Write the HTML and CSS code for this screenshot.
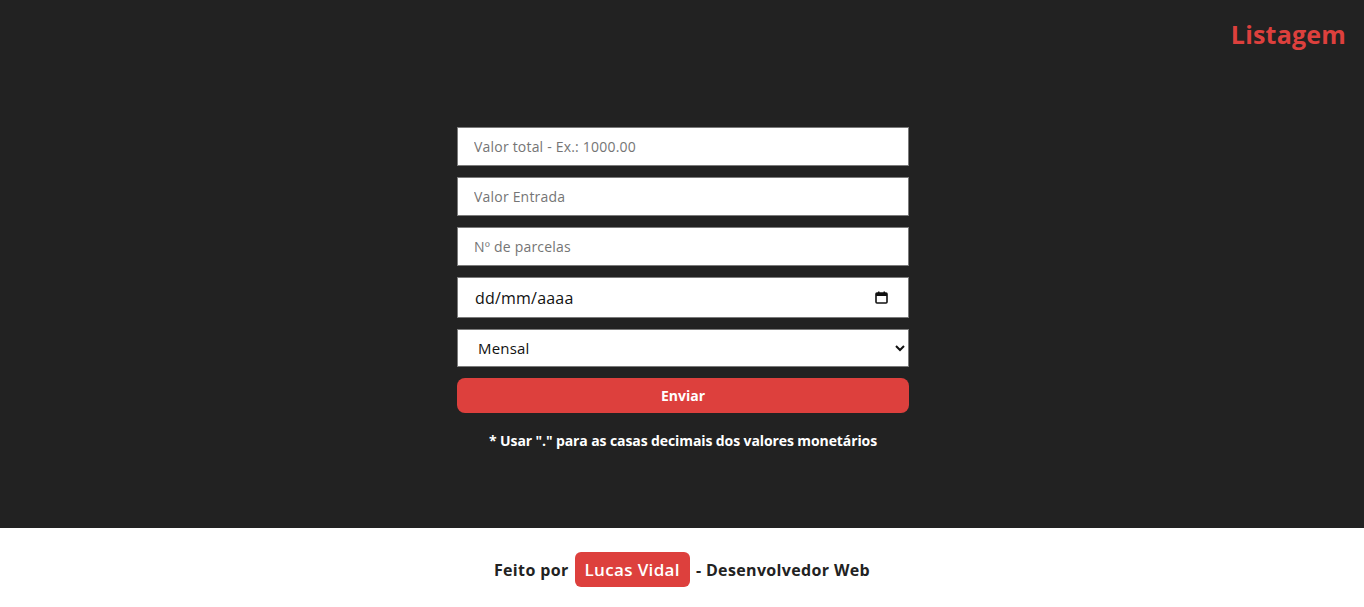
FILE: index.html
```html
<!DOCTYPE html>
<html lang="pt-BR">
<head>
<meta charset="utf-8">
<title>Simulador</title>
<link rel="stylesheet" href="styles.css">
</head>
<body>
<main class="main">
  <header class="topbar">
    <a class="nav-link" href="#">Listagem</a>
  </header>
  <form class="form">
    <input class="field" type="text" placeholder="Valor total - Ex.: 1000.00">
    <input class="field" type="text" placeholder="Valor Entrada">
    <input class="field" type="text" placeholder="Nº de parcelas">
    <div class="field date-field">
      <span class="date-text">dd/mm/aaaa</span>
      <svg class="cal-icon" width="13" height="13" viewBox="0 0 13 13" aria-hidden="true">
        <rect x="1" y="2" width="11" height="10" rx="1" fill="none" stroke="#111" stroke-width="1.6"/>
        <rect x="1" y="2" width="11" height="3" fill="#111"/>
        <rect x="3" y="0.5" width="1.5" height="2" fill="#111"/>
        <rect x="8.5" y="0.5" width="1.5" height="2" fill="#111"/>
      </svg>
    </div>
    <select class="field select-field">
      <option>Mensal</option>
      <option>Quinzenal</option>
      <option>Semanal</option>
    </select>
    <button class="submit" type="button">Enviar</button>
    <p class="note">* Usar "." para as casas decimais dos valores monetários</p>
  </form>
</main>
<footer class="footer">
  <span>Feito por</span>
  <span class="badge">Lucas Vidal</span>
  <span>- Desenvolvedor Web</span>
</footer>
</body>
</html>
```
FILE: styles.css
```css
* { box-sizing: border-box; }
html, body { margin: 0; padding: 0; }
body {
  font-family: "Open Sans", "Noto Sans", sans-serif;
  background: #ffffff;
}
.main {
  background: #222222;
  height: 528px;
  display: flex;
  flex-direction: column;
  align-items: center;
}
.topbar {
  align-self: stretch;
  display: flex;
  justify-content: flex-end;
  padding: 17px 18px 0 0;
  height: 127px;
}
.nav-link {
  color: #dd403d;
  font-weight: 700;
  font-size: 25px;
  text-decoration: none;
  line-height: 34px;
  letter-spacing: 0.2px;
}
.form {
  width: 452px;
  margin-left: 2px;
  display: flex;
  flex-direction: column;
}
.field {
  height: 39px;
  margin: 0 0 11px 0;
  border: 1px solid #7a7a7a;
  background: #fff;
  padding: 0 16px;
  font-family: inherit;
  font-size: 14px;
  color: #222;
  outline: none;
  letter-spacing: 0.2px;
}
.field::placeholder { color: #757575; }
.date-field {
  height: 41px;
  display: flex;
  align-items: center;
  justify-content: space-between;
  padding: 0 20px 0 17px;
}
.date-text { font-size: 16px; color: #111; letter-spacing: 0.2px; }
.select-field {
  height: 38px;
  padding: 0 0 0 16px;
  font-size: 15px;
  color: #111;
  margin-bottom: 11px;
}
.submit {
  height: 35px;
  border: none;
  border-radius: 8px;
  background: #dd403d;
  color: #fff;
  font-family: inherit;
  font-weight: 700;
  font-size: 14px;
  cursor: pointer;
}
.note {
  margin: 18px 0 0 0;
  color: #fff;
  font-weight: 700;
  font-size: 14px;
  text-align: center;
  line-height: 20px;
  letter-spacing: -0.1px;
}
.footer {
  height: 79px;
  padding-top: 4px;
  display: flex;
  align-items: center;
  justify-content: center;
  gap: 6px;
  font-weight: 700;
  font-size: 16px;
  color: #222;
  letter-spacing: 0.35px;
}
.badge {
  background: #dd403d;
  color: #fff;
  border-radius: 6px;
  padding: 0 10px;
  height: 35px;
  line-height: 35px;
  font-weight: 600;
  font-size: 17px;
}
```
